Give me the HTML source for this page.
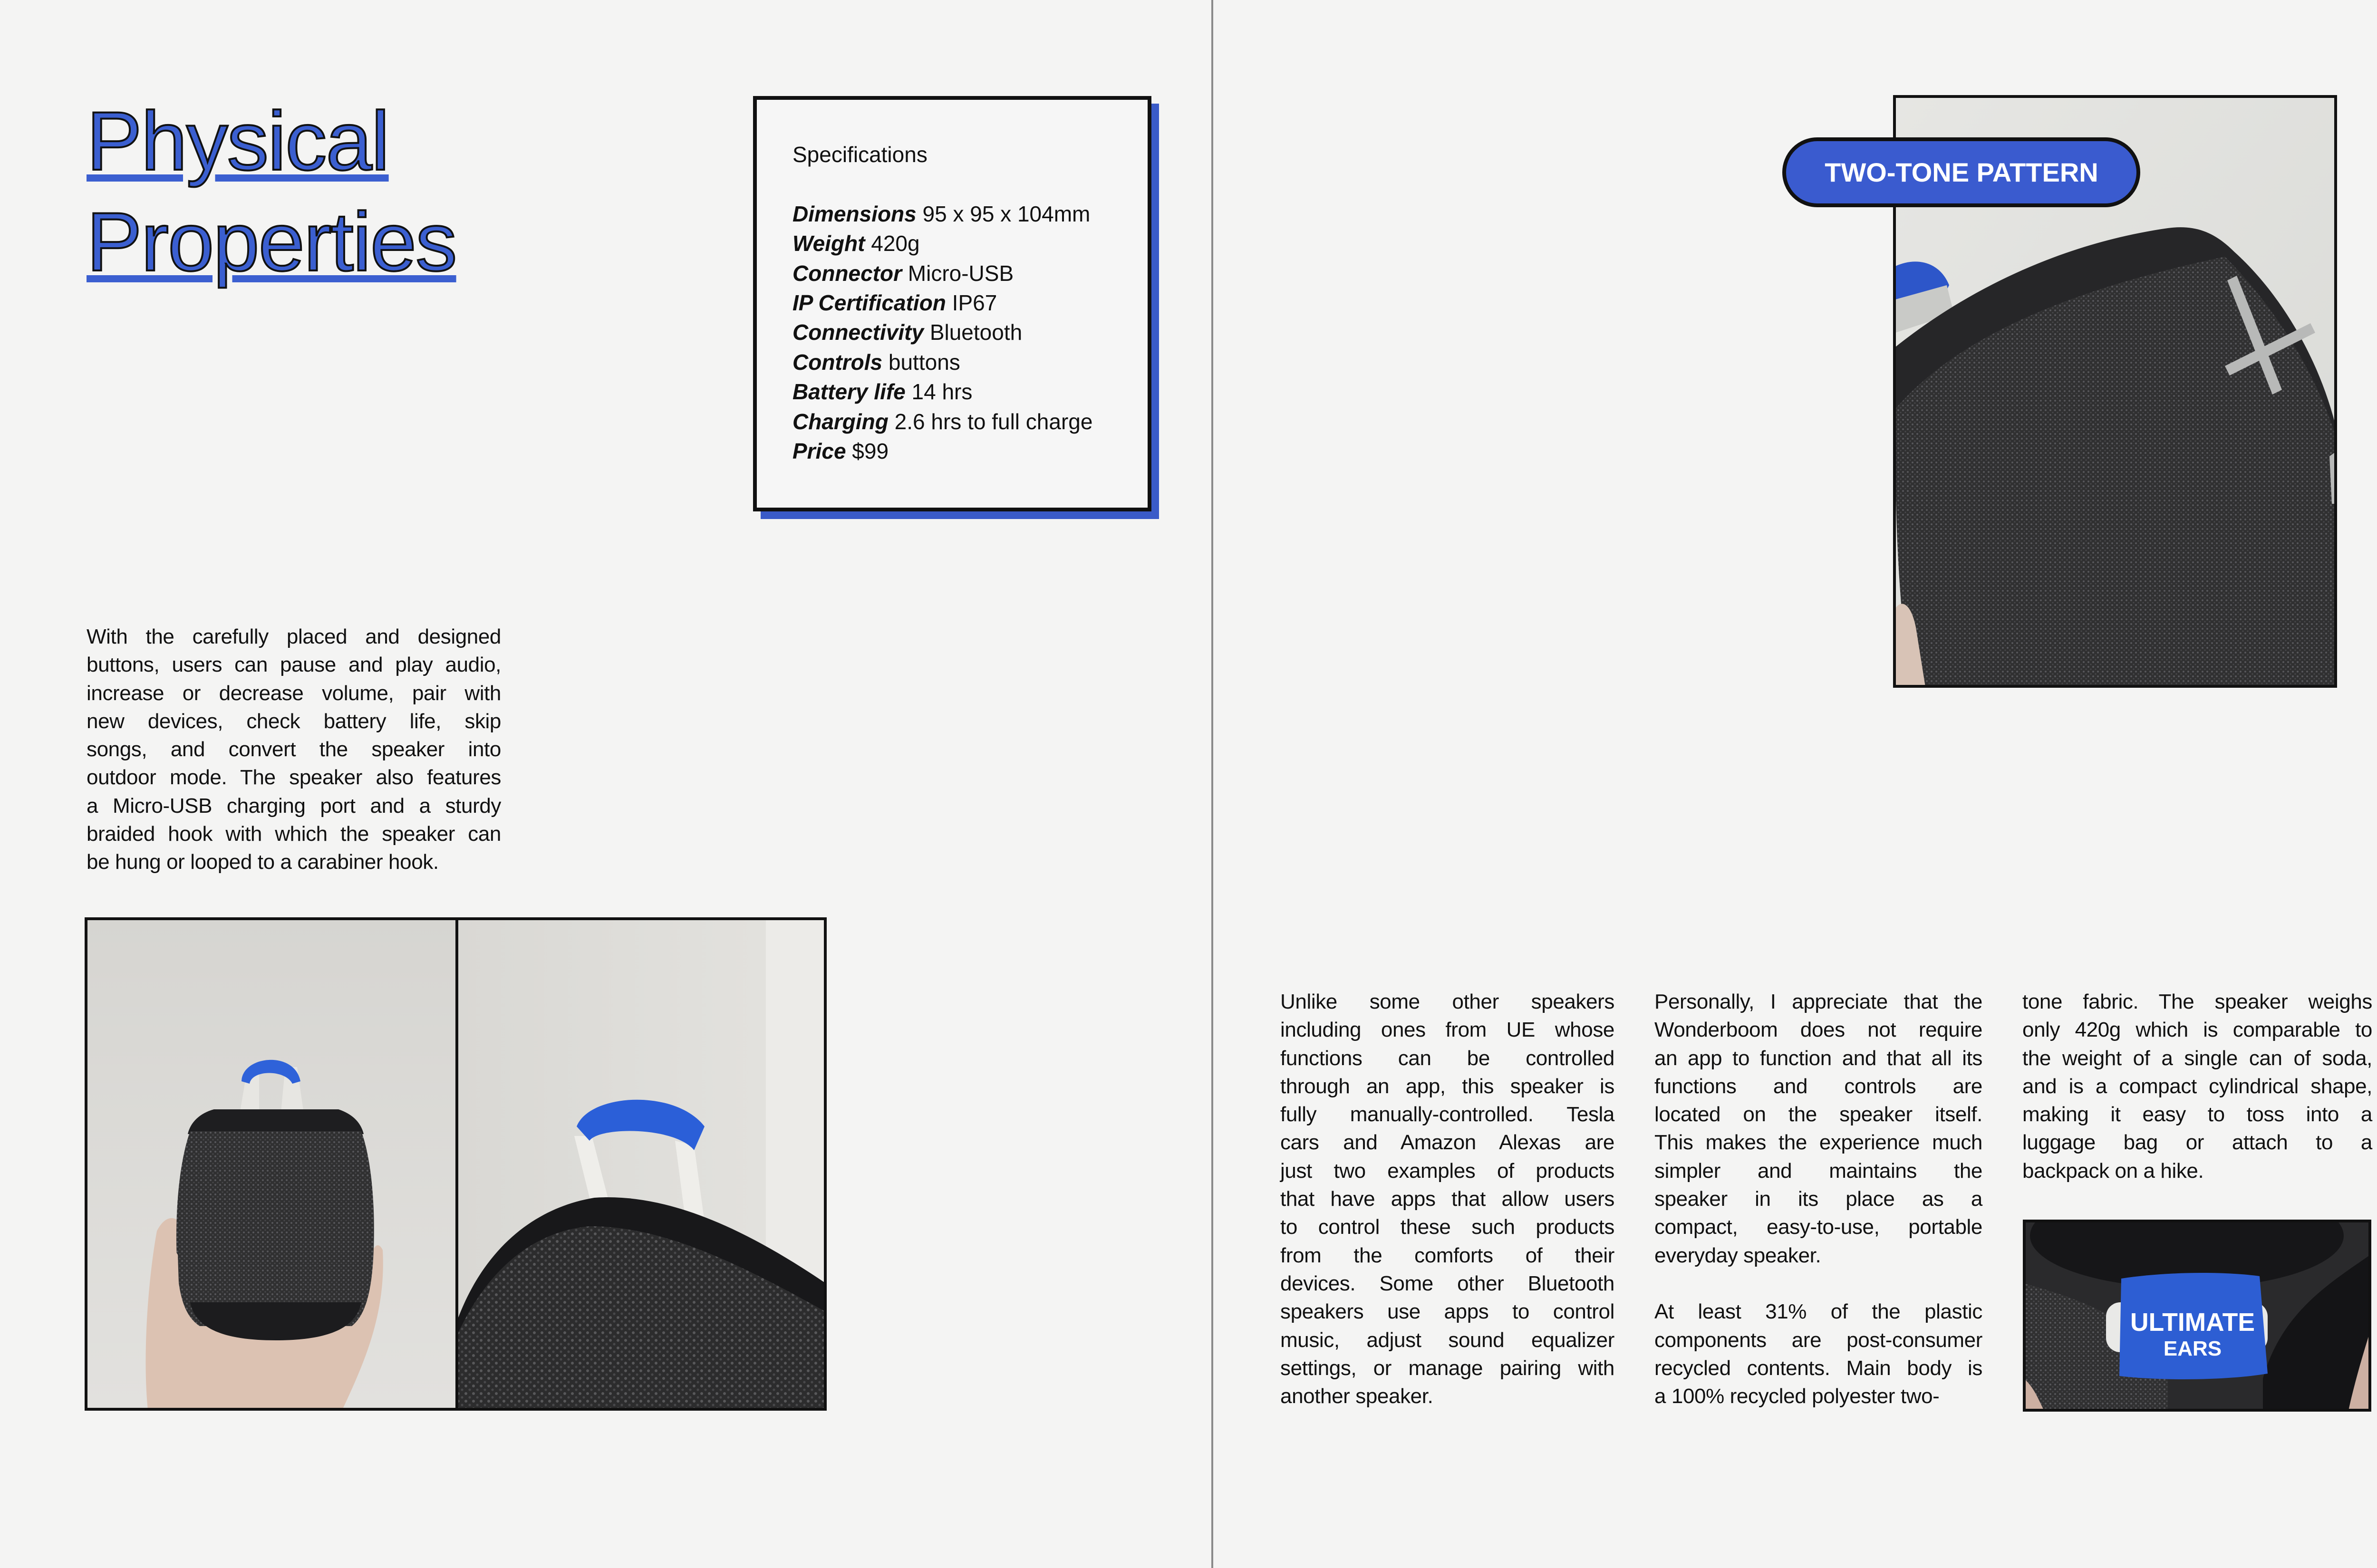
<!DOCTYPE html>
<html><head><meta charset="utf-8"><style>
html,body{margin:0;padding:0}
body{width:5100px;height:3299px;background:#f4f4f3;position:relative;overflow:hidden;font-family:"Liberation Sans",sans-serif;color:#111}
.abs{position:absolute}
.title{left:182px;top:192px;font-size:175px;line-height:212px;color:#3b5fd0;-webkit-text-stroke:4px #111;text-decoration:underline;text-decoration-color:#3b5fd0;text-decoration-thickness:15px;text-underline-offset:10px;letter-spacing:-2px;white-space:nowrap}
.spec{left:1584px;top:202px;width:822px;height:858px;border:8px solid #111;background:#f6f6f6;box-shadow:16px 16px 0 #3a5bc8}
.spect{left:1667px;top:294px;font-size:46px;line-height:62.4px;white-space:nowrap}
.spect b{font-style:italic}
.para{font-size:44px;line-height:59.3px;letter-spacing:-0.4px}
.para div{text-align:justify;text-align-last:justify;white-space:nowrap;height:59.3px}
.para div.l{text-align-last:left}
</style></head><body>
<div class="abs title">Physical <br>Properties</div>

<div class="abs spec"></div>
<div class="abs spect">Specifications<br><br>
<b>Dimensions</b> 95 x 95 x 104mm<br>
<b>Weight</b> 420g<br>
<b>Connector</b> Micro-USB<br>
<b>IP Certification</b> IP67<br>
<b>Connectivity</b> Bluetooth<br>
<b>Controls</b> buttons<br>
<b>Battery life</b> 14 hrs<br>
<b>Charging</b> 2.6 hrs to full charge<br>
<b>Price</b> $99</div>

<div class="abs para" style="left:182px;top:1310px;width:872px">
<div>With the carefully placed and designed</div>
<div>buttons, users can pause and play audio,</div>
<div>increase or decrease volume, pair with</div>
<div>new devices, check battery life, skip</div>
<div>songs, and convert the speaker into</div>
<div>outdoor mode. The speaker also features</div>
<div>a Micro-USB charging port and a sturdy</div>
<div>braided hook with which the speaker can</div>
<div class="l">be hung or looped to a carabiner hook.</div>
</div>

<svg class="abs" style="left:0;top:0" width="5100" height="3299" viewBox="0 0 5100 3299">
<defs>
<linearGradient id="bg1" x1="0" y1="0" x2="0" y2="1"><stop offset="0" stop-color="#d6d5d1"/><stop offset="1" stop-color="#e2e1de"/></linearGradient>
<linearGradient id="bg2" x1="0" y1="0" x2="1" y2="0"><stop offset="0" stop-color="#d9d8d4"/><stop offset="1" stop-color="#e4e3df"/></linearGradient>
<linearGradient id="bg3" x1="0" y1="0" x2="1" y2="1"><stop offset="0" stop-color="#e6e6e3"/><stop offset="1" stop-color="#d9dad6"/></linearGradient>
<pattern id="fab" width="10" height="10" patternUnits="userSpaceOnUse"><rect width="10" height="10" fill="#303031"/><circle cx="3" cy="3" r="2" fill="#56565a"/><circle cx="8" cy="8" r="1.6" fill="#48484a"/></pattern>
<pattern id="fab2" width="16" height="16" patternUnits="userSpaceOnUse"><rect width="16" height="16" fill="#2c2c2d"/><circle cx="4" cy="4" r="3" fill="#58585a"/><circle cx="12" cy="12" r="2.6" fill="#48484a"/></pattern>
<clipPath id="c1"><rect x="180" y="1932" width="781" height="1034"/></clipPath>
<clipPath id="c2"><rect x="961" y="1932" width="776" height="1034"/></clipPath>
<clipPath id="c3"><rect x="3984" y="202" width="930" height="1243"/></clipPath>
<clipPath id="c4"><rect x="4257" y="2568" width="729" height="400"/></clipPath>
</defs>
<g clip-path="url(#c1)">
<rect x="180" y="1932" width="781" height="1034" fill="url(#bg1)"/>
<path d="M330 2590 C350 2550 380 2555 392 2600 L400 2700 L760 2720 C775 2640 790 2600 805 2630 C812 2760 770 2860 720 2966 L311 2966 C300 2860 310 2700 330 2590Z" fill="#dcc2b2"/>
<path d="M503 2350 L520 2250 L545 2250 L545 2350Z M590 2350 L600 2245 L625 2245 L640 2350Z" fill="#e7e6e2"/>
<path d="M508 2275 C510 2220 620 2210 632 2275 L615 2280 C600 2250 530 2250 525 2280Z" fill="#2f62d9"/>
<path d="M450 2334 L712 2334 C745 2345 760 2365 765 2386 L395 2386 C400 2362 420 2342 450 2334Z" fill="#1e1e20"/>
<path d="M400 2380 L760 2380 C785 2450 790 2560 785 2650 C780 2730 765 2770 740 2790 L420 2790 C390 2770 375 2730 372 2650 C368 2560 375 2450 400 2380Z" fill="url(#fab)"/>
<path d="M400 2740 L760 2740 C750 2790 700 2820 580 2820 C460 2820 410 2790 400 2740Z" fill="#1c1c1e"/>
<path d="M330 2650 C340 2620 360 2615 374 2640 L378 2760 L330 2760Z" fill="#dcc2b2"/>
</g>
<g clip-path="url(#c2)">
<rect x="961" y="1932" width="776" height="1034" fill="url(#bg2)"/>
<rect x="1611" y="1932" width="126" height="1034" fill="#ecebe8"/>
<path d="M1208 2390 L1245 2390 L1289 2560 L1250 2560Z M1420 2400 L1460 2410 L1490 2630 L1450 2630Z" fill="#efeeea"/>
<path d="M1213 2370 C1240 2300 1420 2290 1482 2370 L1460 2420 C1420 2370 1260 2370 1240 2400Z" fill="#2b5fd8"/>
<path d="M961 2966 L961 2780 C1020 2620 1130 2540 1250 2520 C1400 2510 1560 2580 1737 2700 L1737 2966Z" fill="#18181a"/>
<path d="M961 2966 L961 2810 C1030 2660 1130 2590 1240 2580 C1390 2580 1540 2650 1737 2760 L1737 2966Z" fill="url(#fab2)"/>
</g>
<rect x="181" y="1933" width="1555" height="1032" fill="none" stroke="#111" stroke-width="6"/>
<line x1="961" y1="1932" x2="961" y2="2966" stroke="#111" stroke-width="6"/>

<rect x="2548" y="0" width="4" height="3299" fill="#8a8a8a"/>

<g clip-path="url(#c3)">
<rect x="3984" y="202" width="930" height="1243" fill="url(#bg3)"/>
<path d="M3987 560 C4030 540 4080 550 4100 600 L4080 640 L3987 640Z" fill="#2d56c9"/>
<path d="M3987 630 L4095 600 L4110 660 L3987 700Z" fill="#c9cac7"/>
<path d="M3987 730 C4150 600 4350 510 4560 480 C4620 472 4660 490 4700 530 C4800 620 4880 760 4914 900 L4914 1445 L4020 1445 C3995 1300 3987 1100 3987 900Z" fill="#262628"/>
<path d="M3987 860 C4100 730 4300 620 4680 540 C4780 640 4870 780 4914 920 L4914 1445 L4020 1445 C3995 1300 3987 1100 3987 960Z" fill="url(#fab)"/>
<path d="M3987 1280 C4000 1260 4020 1270 4030 1320 L4050 1445 L3987 1445Z" fill="#d8c3b6"/>
<path d="M4685 590 L4705 580 L4800 820 L4780 830Z M4680 770 L4860 680 L4870 700 L4690 790Z M4900 960 L4914 950 L4914 1060 L4905 1060Z" fill="#b8b9b8"/>
</g>
<rect x="3985" y="203" width="928" height="1241" fill="none" stroke="#111" stroke-width="6"/>

<g clip-path="url(#c4)">
<rect x="4257" y="2568" width="729" height="400" fill="#2a2a2c"/>
<ellipse cx="4600" cy="2600" rx="330" ry="110" fill="#161618"/>
<path d="M4257 2700 C4400 2740 4500 2780 4560 2900 L4560 2968 L4257 2968Z" fill="url(#fab)"/>
<path d="M4986 2640 C4900 2700 4800 2760 4760 2900 L4760 2968 L4986 2968Z" fill="#141416"/>
<path d="M4257 2900 C4280 2920 4290 2950 4300 2968 L4257 2968Z M4986 2800 C4970 2850 4950 2920 4940 2968 L4986 2968Z" fill="#cdb0a2"/>
<rect x="4430" y="2740" width="340" height="105" rx="30" fill="#e9e9e7"/>
<path d="M4462 2690 C4560 2675 4680 2675 4753 2685 L4770 2890 C4680 2905 4540 2905 4458 2895Z" fill="#2d5ed3"/>
<text x="4612" y="2800" text-anchor="middle" font-family="Liberation Sans" font-weight="bold" font-size="54" fill="#fff" textLength="262" lengthAdjust="spacingAndGlyphs">ULTIMATE</text>
<text x="4612" y="2852" text-anchor="middle" font-family="Liberation Sans" font-weight="bold" font-size="44" fill="#fff">EARS</text>
</g>
<rect x="4258" y="2569" width="727" height="398" fill="none" stroke="#111" stroke-width="6"/>

<rect x="3753" y="293" width="745" height="139" rx="69.5" fill="#3a5bcf" stroke="#111" stroke-width="8"/>
<text x="4126" y="382" text-anchor="middle" font-family="Liberation Sans" font-weight="bold" font-size="56" fill="#fff">TWO-TONE PATTERN</text>
</svg>

<div class="abs para" style="left:2693px;top:2078px;width:703px">
<div>Unlike some other speakers</div>
<div>including ones from UE whose</div>
<div>functions can be controlled</div>
<div>through an app, this speaker is</div>
<div>fully manually-controlled. Tesla</div>
<div>cars and Amazon Alexas are</div>
<div>just two examples of products</div>
<div>that have apps that allow users</div>
<div>to control these such products</div>
<div>from the comforts of their</div>
<div>devices. Some other Bluetooth</div>
<div>speakers use apps to control</div>
<div>music, adjust sound equalizer</div>
<div>settings, or manage pairing with</div>
<div class="l">another speaker.</div>
</div>

<div class="abs para" style="left:3480px;top:2078px;width:690px">
<div>Personally, I appreciate that the</div>
<div>Wonderboom does not require</div>
<div>an app to function and that all its</div>
<div>functions and controls are</div>
<div>located on the speaker itself.</div>
<div>This makes the experience much</div>
<div>simpler and maintains the</div>
<div>speaker in its place as a</div>
<div>compact, easy-to-use, portable</div>
<div class="l">everyday speaker.</div>
<div class="l"></div>
<div>At least 31% of the plastic</div>
<div>components are post-consumer</div>
<div>recycled contents. Main body is</div>
<div class="l">a 100% recycled polyester two-</div>
</div>

<div class="abs para" style="left:4254px;top:2078px;width:736px">
<div>tone fabric. The speaker weighs</div>
<div>only 420g which is comparable to</div>
<div>the weight of a single can of soda,</div>
<div>and is a compact cylindrical shape,</div>
<div>making it easy to toss into a</div>
<div>luggage bag or attach to a</div>
<div class="l">backpack on a hike.</div>
</div>
</body></html>
